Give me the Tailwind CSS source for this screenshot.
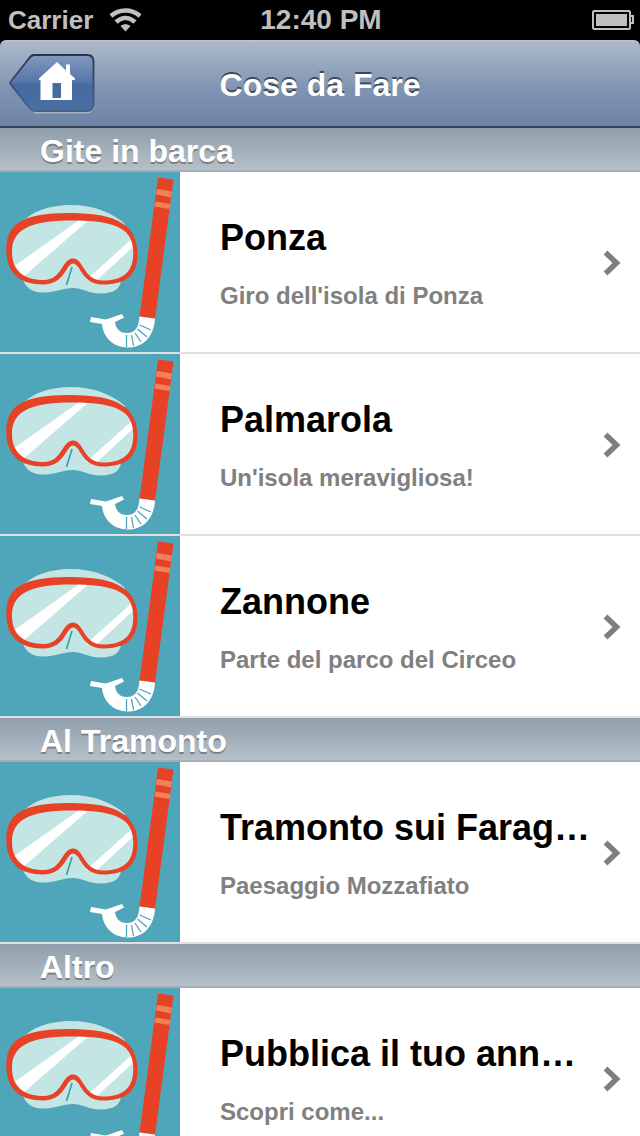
<!DOCTYPE html>
<html lang="it">
<head>
<meta charset="utf-8">
<meta name="viewport" content="width=device-width, initial-scale=1">
<title>Cose da Fare</title>
<script src="https://cdn.jsdelivr.net/npm/@tailwindcss/browser@4"></script>
</head>
<body class="flex h-screen flex-col overflow-hidden bg-black font-['Liberation_Sans',Arial,sans-serif] font-bold">

<svg class="hidden" aria-hidden="true">
  <symbol id="snorkel" viewBox="0 0 180 180">
    <rect width="180" height="180" fill="#4fa5ba"/>
    <path d="M21 51C32 39 50 33 71 33C94 33 113 41 125 52L121 108C120 118 113 121 102 121.500C90 122 82 116 73 116C62 116 55 121 42 120.500C32 120 26 116 23 108Z" fill="#c3e5e4"/>
    <path d="M10 80C10 60 22 46 72 46C122 46 135 62 135 81C135 102 122 110 103 110C80 110 83 89 73 89C63 89 63 110 44 110C24 110 10 98 10 80Z" fill="#c3e5e4"/>
    <path d="M82 46L13 95L22 106L91 46ZM134 65L86 108L95 110L135 73Z" fill="#fff"/>
    <path fill-rule="evenodd" fill="#e74226" d="M6.300 78C6.300 53 20 41 70 41C120 41 137.500 55 137.500 82C137.500 104 125 112.500 103 112.500C81 112.500 81 91.500 73 91.500C66 91.500 65 112.500 43 112.500C20 112.500 6.300 101 6.300 78ZM12 80C12 98 23 108 44 108C62 108 62 86.500 73 86.500C84 86.500 83 108.500 103 108.500C122 108.500 133.300 101 133.300 81C133.300 58 119 48.500 72 48.500C27 48.500 12 59 12 80Z"/>
    <path d="M72 95L66.500 113" stroke="#3c9ab4" stroke-width="1.600"/>
    <path d="M158 5.500L173.500 7.500L155 147L139.500 145Z" fill="#e74226"/>
    <path d="M157 17L172 19.500L171 25.500L156 22.500ZM155.500 29.500L170.500 32L169.500 37L154.500 34.500Z" fill="#f28058"/>
    <path d="M139.500 144.500L155 146.500C154 165 143 175.500 128 175.500C112 175.500 103 164 102 152L90 150L91 145L106 147.500L122 142L124 145.500L115 150C116 158 121 161 127 161C136 161 139 154 139.500 144.500Z" fill="#fff"/>
    <path d="M126.500 163V175M131.500 163L133.500 174M135 161L141 170M137.500 157L147 165M139.500 153L151 158" stroke="#4fa5ba" stroke-width="1.300"/>
  </symbol>
  <symbol id="chevron" viewBox="0 0 20 28">
    <path d="M3.500 4.500L14.500 15L3.500 25.500" fill="none" stroke="#7f7f7f" stroke-width="5.500"/>
  </symbol>
</svg>

<div class="grid h-10 shrink-0 grid-cols-[1fr_auto_1fr] items-center pr-1.5 pl-2 text-[#bfbfbf]">
  <div class="flex items-center gap-4 text-[26px] leading-8">
    <span>Carrier</span>
    <svg class="h-6 w-8" viewBox="0 0 32 24" role="img" aria-label="Wi-Fi">
      <g fill="none" stroke="#bfbfbf" stroke-width="4.500">
        <path d="M2 8C10 0.500 23 0.500 31 8"/>
        <path d="M7 14C13 8.500 20 8.500 26 14"/>
      </g>
      <path d="M11.500 18C14.500 15.500 18.500 15.500 21.500 18L16.500 23.500Z" fill="#bfbfbf"/>
    </svg>
  </div>
  <span class="text-[28px] leading-8">12:40 PM</span>
  <svg class="h-5 w-[42px] justify-self-end" viewBox="0 1 42 20" role="img" aria-label="Batteria">
    <path d="M2 2H37L38 3V19L37 20H2L1 19V3ZM39 7H41V14H39" fill="none" stroke="#bfbfbf" stroke-width="2"/>
    <rect x="4" y="5" width="31" height="12" fill="#bfbfbf"/>
  </svg>
</div>

<header class="grid h-[88px] shrink-0 grid-cols-[1fr_auto_1fr] items-center rounded-t-[6px] border-t-2 border-b-2 border-t-[#b9c0cf] border-b-[#38445a] bg-linear-to-b from-[#adb9cb] via-[#8094b2] via-55% to-[#6c84a5] px-2">
  <button type="button" aria-label="Home" class="w-[88px]">
    <svg class="block h-[62px] w-[88px]" viewBox="0 1 88 62" aria-hidden="true">
      <defs>
        <linearGradient id="btn" x1="0" y1="0" x2="0" y2="1">
          <stop offset="0" stop-color="#8299bd"/>
          <stop offset=".5" stop-color="#5475a8"/>
          <stop offset=".52" stop-color="#456a9f"/>
          <stop offset="1" stop-color="#4a6fa5"/>
        </linearGradient>
        <linearGradient id="edge" x1="0" y1="0" x2="0" y2="1">
          <stop offset="0" stop-color="#2a3344"/>
          <stop offset="1" stop-color="#48628c"/>
        </linearGradient>
      </defs>
      <path d="M26 60.500H79Q85 60 86 54" fill="none" stroke="#a3b1c9" stroke-width="2"/>
      <path d="M26 3H79Q85.500 3 85.500 9.500V52.500Q85.500 59 79 59H27Q24 59 21.500 56L2.500 32Q2 31 2.500 30L20.500 7Q23 3 26 3Z" fill="url(#btn)" stroke="url(#edge)" stroke-width="1.800"/>
      <path fill-rule="evenodd" d="M49 10L58 18.500V12.500H62V22L67 26.500V28H64V48H32.500V28H31V26.500ZM44.500 31V46H53V31Z" fill="#fff"/>
    </svg>
  </button>
  <h1 class="pt-0.5 text-[32px] leading-9 text-white [text-shadow:0_-2px_0_#3f4a58]">Cose da Fare</h1>
</header>

<main class="min-h-0 flex-1 overflow-y-auto bg-white [scrollbar-width:none]">
  <section>
    <h2 class="h-11 border-b-2 border-[#a5aeb5] bg-linear-to-b from-[#909fab] to-[#b5c0c9] px-10 pt-[5px] text-[32px] leading-9 text-white [text-shadow:0_2px_0_#808080]">Gite in barca</h2>
    <ul>
      <li class="border-b-2 border-[#e0e0e0]">
        <a href="#ponza" class="flex items-center pr-[18px]">
          <svg class="size-[180px] shrink-0" aria-hidden="true"><use href="#snorkel"/></svg>
          <span class="ml-10 flex min-w-0 flex-1 flex-col gap-6 pt-1">
            <span class="truncate text-4xl leading-10 text-black">Ponza</span>
            <span class="truncate text-2xl leading-7 text-[#808080]">Giro dell'isola di Ponza</span>
          </span>
          <svg class="ml-1 h-7 w-5 shrink-0" aria-hidden="true"><use href="#chevron"/></svg>
        </a>
      </li>
      <li class="border-b-2 border-[#e0e0e0]">
        <a href="#palmarola" class="flex items-center pr-[18px]">
          <svg class="size-[180px] shrink-0" aria-hidden="true"><use href="#snorkel"/></svg>
          <span class="ml-10 flex min-w-0 flex-1 flex-col gap-6 pt-1">
            <span class="truncate text-4xl leading-10 text-black">Palmarola</span>
            <span class="truncate text-2xl leading-7 text-[#808080]">Un'isola meravigliosa!</span>
          </span>
          <svg class="ml-1 h-7 w-5 shrink-0" aria-hidden="true"><use href="#chevron"/></svg>
        </a>
      </li>
      <li class="border-b-2 border-[#e0e0e0]">
        <a href="#zannone" class="flex items-center pr-[18px]">
          <svg class="size-[180px] shrink-0" aria-hidden="true"><use href="#snorkel"/></svg>
          <span class="ml-10 flex min-w-0 flex-1 flex-col gap-6 pt-1">
            <span class="truncate text-4xl leading-10 text-black">Zannone</span>
            <span class="truncate text-2xl leading-7 text-[#808080]">Parte del parco del Circeo</span>
          </span>
          <svg class="ml-1 h-7 w-5 shrink-0" aria-hidden="true"><use href="#chevron"/></svg>
        </a>
      </li>
    </ul>
  </section>
  <section>
    <h2 class="h-11 border-b-2 border-[#a5aeb5] bg-linear-to-b from-[#909fab] to-[#b5c0c9] px-10 pt-[5px] text-[32px] leading-9 text-white [text-shadow:0_2px_0_#808080]">Al Tramonto</h2>
    <ul>
      <li class="border-b-2 border-[#e0e0e0]">
        <a href="#tramonto" class="flex items-center pr-[18px]">
          <svg class="size-[180px] shrink-0" aria-hidden="true"><use href="#snorkel"/></svg>
          <span class="ml-10 flex min-w-0 flex-1 flex-col gap-6 pt-1">
            <span class="truncate text-4xl leading-10 text-black">Tramonto sui Farag…</span>
            <span class="truncate text-2xl leading-7 text-[#808080]">Paesaggio Mozzafiato</span>
          </span>
          <svg class="ml-1 h-7 w-5 shrink-0" aria-hidden="true"><use href="#chevron"/></svg>
        </a>
      </li>
    </ul>
  </section>
  <section>
    <h2 class="h-11 border-b-2 border-[#a5aeb5] bg-linear-to-b from-[#909fab] to-[#b5c0c9] px-10 pt-[5px] text-[32px] leading-9 text-white [text-shadow:0_2px_0_#808080]">Altro</h2>
    <ul>
      <li class="border-b-2 border-[#e0e0e0]">
        <a href="#annuncio" class="flex items-center pr-[18px]">
          <svg class="size-[180px] shrink-0" aria-hidden="true"><use href="#snorkel"/></svg>
          <span class="ml-10 flex min-w-0 flex-1 flex-col gap-6 pt-1">
            <span class="truncate text-4xl leading-10 text-black">Pubblica il tuo ann…</span>
            <span class="truncate text-2xl leading-7 text-[#808080]">Scopri come...</span>
          </span>
          <svg class="ml-1 h-7 w-5 shrink-0" aria-hidden="true"><use href="#chevron"/></svg>
        </a>
      </li>
    </ul>
  </section>
</main>
</body>
</html>
